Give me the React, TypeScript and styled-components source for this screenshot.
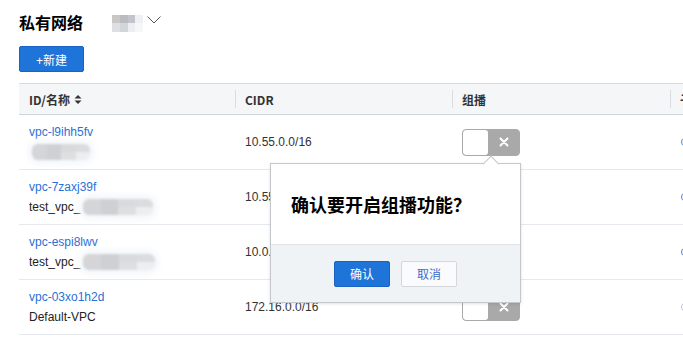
import styled, { createGlobalStyle } from 'styled-components';

const GlobalStyle = createGlobalStyle`
    html, body {
        margin: 0;
        padding: 0;
        background: #fff;
    }
    body {
        font-family: "Liberation Sans", "Noto Sans CJK SC", sans-serif;
        font-size: 12px;
        color: #333;
    }
`

type Vpc = {
    id: string
    prefix?: string
    name?: string
    blurWidth?: number
    cidr: string
}

const vpcs: Vpc[] = [
    { id: 'vpc-l9ihh5fv', blurWidth: 58, cidr: '10.55.0.0/16' },
    { id: 'vpc-7zaxj39f', prefix: 'test_vpc_', blurWidth: 70, cidr: '10.55.0.0/16' },
    { id: 'vpc-espi8lwv', prefix: 'test_vpc_', blurWidth: 72, cidr: '10.0.0.0/16' },
    { id: 'vpc-03xo1h2d', name: 'Default-VPC', cidr: '172.16.0.0/16' },
]

const headerTones = ['#c9c6c6', '#b9bcc1', '#c2c6cc', '#eef0f3', '#dedfe2', '#d2d5d9', '#eceef1', '#f6f7f9']
const rowTones = ['#d6d6d8', '#cfd0d3', '#d9dadc', '#dcdcde', '#d4d5d8', '#cfd0d2', '#dedfe1', '#eceef0']

function Mosaic({ width, height, light }: { width: number; height: number; light?: boolean }) {
    const tones = light ? rowTones : headerTones
    return (
        <MosaicBox style={{ width, height }} $light={light}>
            {tones.map((tone, i) => <MosaicCell key={i} $tone={tone} />)}
        </MosaicBox>
    )
}

function Toggle() {
    return (
        <Switch>
            <Knob />
            <SwitchOff>
                <svg width="10" height="10" viewBox="0 0 10 10">
                    <path d="M1.5 1.5 L8.5 8.5 M8.5 1.5 L1.5 8.5" stroke="#fff" strokeWidth="2" strokeLinecap="round" />
                </svg>
            </SwitchOff>
        </Switch>
    )
}

function SortIcon() {
    return (
        <svg width="8" height="11" viewBox="0 0 8 11">
            <path d="M0.5 4.5 L4 1 L7.5 4.5 Z" fill="#333" />
            <path d="M0.5 6.5 L4 10 L7.5 6.5 Z" fill="#333" />
        </svg>
    )
}

function App() {
    return (
        <Page>
            <GlobalStyle />
            <TitleRow>
                <Title>私有网络</Title>
                <RegionSelect>
                    <Mosaic width={31} height={17} />
                    <svg width="14" height="8" viewBox="0 0 14 8">
                        <path d="M0.5 0.5 L7 7 L13.5 0.5" fill="none" stroke="#555" strokeWidth="1" />
                    </svg>
                </RegionSelect>
            </TitleRow>

            <PrimaryButton>+新建</PrimaryButton>

            <Table>
                <HeaderRow>
                    <HeaderCell>ID/名称 <SortIcon /></HeaderCell>
                    <HeaderCell $divider>CIDR</HeaderCell>
                    <HeaderCell $divider>组播</HeaderCell>
                    <HeaderCell $divider>子网</HeaderCell>
                </HeaderRow>
                {vpcs.map(vpc => (
                    <BodyRow key={vpc.id}>
                        <Cell>
                            <IdLink>{vpc.id}</IdLink>
                            <NameLine>
                                {vpc.prefix}
                                {vpc.name}
                                {vpc.blurWidth && <Mosaic width={vpc.blurWidth} height={16} light />}
                            </NameLine>
                        </Cell>
                        <Cell>{vpc.cidr}</Cell>
                        <Cell><Toggle /></Cell>
                        <Cell><StatusDot $muted={!vpc.blurWidth} /></Cell>
                    </BodyRow>
                ))}
            </Table>

            <Popover>
                <PopoverArrow />
                <PopoverBody>确认要开启组播功能？</PopoverBody>
                <PopoverFooter>
                    <DialogButton $primary>确认</DialogButton>
                    <DialogButton>取消</DialogButton>
                </PopoverFooter>
            </Popover>
        </Page>
    )
}

const Page = styled.div`
    position: relative;
    width: 683px;
    height: 346px;
    overflow: hidden;
    padding: 10px 0 0 19px;
    box-sizing: border-box;
`

const TitleRow = styled.div`
    display: flex;
    align-items: center;
    height: 24px;
    gap: 29px;
`

const Title = styled.h2`
    margin: 0;
    font-size: 16px;
    font-weight: bold;
    color: #000;
    font-family: "Noto Sans CJK SC", sans-serif;
    line-height: 24px;
`

const RegionSelect = styled.div`
    display: flex;
    align-items: center;
    gap: 4px;
    margin-top: 2px;
    svg {
        margin-top: -6px;
    }
`

const MosaicBox = styled.div<{ $light?: boolean }>`
    display: inline-grid;
    grid-template-columns: repeat(4, 1fr);
    grid-template-rows: repeat(2, 1fr);
    vertical-align: middle;
    margin-left: ${p => (p.$light ? '3px' : '0')};
    border-radius: ${p => (p.$light ? '6px' : '0')};
    overflow: hidden;
    filter: ${p => (p.$light ? 'blur(0.8px)' : 'none')};
    box-shadow: ${p => (p.$light ? '0 0 6px 4px #f3f6fa' : 'none')};
`

const MosaicCell = styled.div<{ $tone: string }>`
    background: ${p => p.$tone};
`

const PrimaryButton = styled.button`
    display: block;
    margin-top: 12px;
    width: 65px;
    height: 26px;
    border: 1px solid #1a63c4;
    border-radius: 2px;
    background: #1f74d9;
    color: #fff;
    font-size: 12px;
    font-family: "Liberation Sans", "Noto Sans CJK SC", sans-serif;
    padding: 0;
    cursor: pointer;
`

const Table = styled.div`
    margin-top: 11px;
    width: 760px;
`

const columns = `216px 217px 218px 109px`

const HeaderRow = styled.div`
    display: grid;
    grid-template-columns: ${columns};
    height: 30px;
    background: #f4f6f8;
    border-top: 1px solid #d6dae0;
    border-bottom: 1px solid #d0d5db;
`

const HeaderCell = styled.div<{ $divider?: boolean }>`
    position: relative;
    display: flex;
    align-items: center;
    gap: 4px;
    padding-left: 10px;
    font-weight: bold;
    color: #333;
    font-family: "Noto Sans CJK SC", sans-serif;

    &::before {
        content: '';
        display: ${p => (p.$divider ? 'block' : 'none')};
        position: absolute;
        left: 0;
        top: 6px;
        bottom: 6px;
        width: 1px;
        background: #d9dde2;
    }
`

const BodyRow = styled.div`
    display: grid;
    grid-template-columns: ${columns};
    height: 54px;
    border-bottom: 1px solid #e5e8ec;
`

const Cell = styled.div`
    display: flex;
    flex-direction: column;
    justify-content: center;
    padding-left: 10px;
    color: #333;
`

const IdLink = styled.a`
    color: #2a6fd6;
    line-height: 20px;
    cursor: pointer;
`

const NameLine = styled.div`
    display: flex;
    align-items: center;
    line-height: 20px;
    height: 21px;
    color: #222;
`

const Switch = styled.div`
    display: flex;
    width: 58px;
    height: 27px;
    box-sizing: border-box;
    border: 1px solid #a9a9a9;
    border-radius: 4px;
    background: #a9a9a9;
    overflow: hidden;
`

const Knob = styled.div`
    width: 25px;
    height: 100%;
    background: #fff;
    border-radius: 3px;
`

const SwitchOff = styled.div`
    flex: 1;
    display: flex;
    align-items: center;
    justify-content: center;
`

const StatusDot = styled.div<{ $muted?: boolean }>`
    width: 8px;
    height: 8px;
    border-radius: 50%;
    margin-left: 1px;
    border: 1px solid ${p => (p.$muted ? '#c9c2de' : '#5b8fd1')};
    background: ${p => (p.$muted ? 'transparent' : '#e8eef8')};
`

const Popover = styled.div`
    position: absolute;
    left: 270px;
    top: 163px;
    width: 251px;
    height: 140px;
    box-sizing: border-box;
    border: 1px solid #c4c7cc;
    background: #fff;
    box-shadow: 0 1px 3px rgba(0, 0, 0, 0.12);
    display: flex;
    flex-direction: column;
`

const PopoverArrow = styled.div`
    position: absolute;
    top: -6px;
    left: 214px;
    width: 11px;
    height: 11px;
    background: #fff;
    border-top: 1px solid #c4c7cc;
    border-left: 1px solid #c4c7cc;
    transform: rotate(45deg);
`

const PopoverBody = styled.div`
    height: 80px;
    display: flex;
    align-items: center;
    padding-left: 20px;
    font-size: 18px;
    font-weight: bold;
    color: #000;
    font-family: "Noto Sans CJK SC", sans-serif;
`

const PopoverFooter = styled.div`
    flex: 1;
    display: flex;
    align-items: center;
    justify-content: center;
    gap: 11px;
    background: #f0f3f6;
    border-top: 1px solid #e1e5ea;
`

const DialogButton = styled.button<{ $primary?: boolean }>`
    width: 56px;
    height: 26px;
    padding: 0;
    border-radius: 2px;
    font-size: 12px;
    font-family: "Noto Sans CJK SC", sans-serif;
    border: 1px solid ${p => (p.$primary ? '#1a63c4' : '#d3d6da')};
    background: ${p => (p.$primary ? '#1f74d9' : '#fafbfc')};
    color: ${p => (p.$primary ? '#fff' : '#3b6ccf')};
    cursor: pointer;
`

export default App;
